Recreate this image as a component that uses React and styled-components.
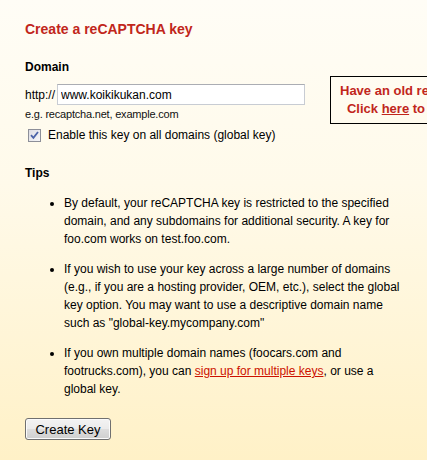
import React from "react";
import styled, { createGlobalStyle } from "styled-components";

const Global = createGlobalStyle`
  html, body { margin: 0; padding: 0; }
  body {
    font-family: "Liberation Sans", Arial, sans-serif;
    color: #000;
    overflow: hidden;
  }
`;

const Page = styled.div`
  box-sizing: border-box;
  width: 427px;
  height: 460px;
  overflow: hidden;
  padding: 20px 0 0 25px;
  background: linear-gradient(#fffdf6 0%, #fffaea 40%, #fff1c7 100%);
`;

const Title = styled.h2`
  margin: 0;
  font-size: 14px;
  line-height: 18px;
  font-weight: bold;
  color: #c1261b;
  white-space: nowrap;
`;

const FormRow = styled.div`
  display: flex;
  align-items: flex-start;
  margin-top: 21px;
`;

const FormCol = styled.div`
  display: flex;
  flex-direction: column;
  width: 280px;
  flex-shrink: 0;
`;

const Label = styled.div`
  font-size: 12px;
  line-height: 16px;
  font-weight: bold;
  margin-top: ${(p) => p.$top || 0}px;
`;

const UrlRow = styled.div`
  display: flex;
  align-items: center;
  margin-top: 9px;
  font-size: 12px;
`;

const Prefix = styled.span`
  width: 32px;
  flex-shrink: 0;
`;

const TextInput = styled.input`
  box-sizing: border-box;
  width: 249px;
  height: 21px;
  margin: 0;
  padding: 1px 3px;
  border: 1px solid #c8ccd3;
  border-top-color: #abadb3;
  background: #fff;
  font-family: "Liberation Sans", Arial, sans-serif;
  font-size: 12px;
  color: #000;
  outline: none;
`;

const Hint = styled.div`
  font-size: 11px;
  letter-spacing: -0.2px;
  line-height: 14px;
  margin-top: 2px;
  color: #111;
  white-space: nowrap;
`;

const CheckRow = styled.label`
  display: flex;
  align-items: center;
  margin-top: 5px;
  font-size: 12px;
  line-height: 18px;
  white-space: nowrap;
`;

const Box = styled.span`
  box-sizing: border-box;
  width: 13px;
  height: 13px;
  margin: 0 7px 0 3px;
  border: 1px solid #8d8f99;
  background: linear-gradient(135deg, #dcdce4, #f6f6f8);
  display: flex;
  align-items: center;
  justify-content: center;
  flex-shrink: 0;
`;

const Notice = styled.div`
  flex-shrink: 0;
  margin: 17px 0 0 25px;
  padding: 5px 9px;
  border: 1px solid #000;
  text-align: center;
  font-size: 13px;
  line-height: 18px;
  font-weight: bold;
  color: #c1261b;
  white-space: nowrap;
`;

const Link = styled.a`
  color: ${(p) => (p.$bright ? "#cc1100" : "#c1261b")};
  text-decoration: underline;
  font-weight: inherit;
`;

const TipList = styled.ul`
  margin: 13px 0 0;
  padding: 0 0 0 39px;
  width: 340px;
  list-style: disc;
  font-size: 12px;
  line-height: 18px;
`;

const Tip = styled.li`
  & + & {
    margin-top: 12px;
  }
`;

const Button = styled.button`
  box-sizing: border-box;
  display: block;
  width: 86px;
  height: 22px;
  margin-top: 20px;
  padding: 0;
  border: 1px solid #707070;
  border-radius: 3px;
  box-shadow: inset 0 0 0 1px #fbfbfb;
  background: linear-gradient(#f3f3f3 0%, #ebebeb 50%, #dddddd 51%, #cfcfcf 100%);
  font-family: "Liberation Sans", Arial, sans-serif;
  font-size: 13px;
  color: #000;
`;

export default function App() {
  return (
    <>
      <Global />
      <Page>
        <Title>Create a reCAPTCHA key</Title>
        <FormRow>
          <FormCol>
            <Label>Domain</Label>
            <UrlRow>
              <Prefix>http://</Prefix>
              <TextInput defaultValue="www.koikikukan.com" />
            </UrlRow>
            <Hint>e.g. recaptcha.net, example.com</Hint>
            <CheckRow>
              <Box>
                <svg width="9" height="9" viewBox="0 0 9 9">
                  <path d="M1 4.2 L3.4 6.8 L8 1" fill="none" stroke="#4a62a8" strokeWidth="1.8" />
                </svg>
              </Box>
              Enable this key on all domains (global key)
            </CheckRow>
          </FormCol>
          <Notice>
            Have an old reCAPTCHA key?
            <br />
            Click <Link href="#">here</Link> to upgrade them.
          </Notice>
        </FormRow>
        <Label $top={21}>Tips</Label>
        <TipList>
          <Tip>
            By default, your reCAPTCHA key is restricted to the specified domain, and any
            subdomains for additional security. A key for foo.com works on test.foo.com.
          </Tip>
          <Tip>
            If you wish to use your key across a large number of domains (e.g., if you are a
            hosting provider, OEM, etc.), select the global key option. You may want to use a
            descriptive domain name such as "global-key.mycompany.com"
          </Tip>
          <Tip>
            If you own multiple domain names (foocars.com and footrucks.com), you can{" "}
            <Link $bright href="#">sign up for multiple keys</Link>, or use a global key.
          </Tip>
        </TipList>
        <Button>Create Key</Button>
      </Page>
    </>
  );
}
